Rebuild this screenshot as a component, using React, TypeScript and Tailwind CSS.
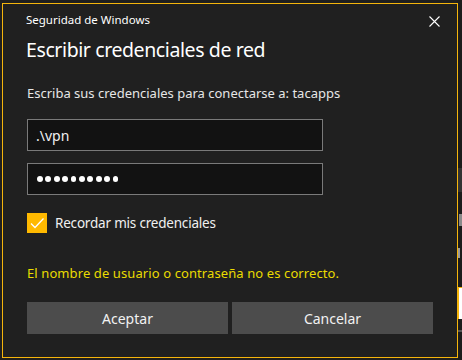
const FONT = { fontFamily: '"Noto Sans", "Open Sans", sans-serif' };

function Dots({ count }: { count: number }) {
  return (
    <div className="flex items-center gap-[2.6px]">
      {Array.from({ length: count }).map((_, i) => (
        <span key={i} className="block w-[5.8px] h-[5.8px] rounded-full bg-white" />
      ))}
    </div>
  );
}

export default function App() {
  return (
    <div className="w-[462px] h-[360px] bg-[#1f1f1f] flex overflow-hidden" style={FONT}>
      {/* dialog */}
      <div className="ml-[2px] mt-[3px] w-[456px] h-[355px] border border-[#f5b50c] bg-[#202020] flex flex-col px-[23px]">
        <div className="flex items-start justify-between mt-[8px]">
          <span className="text-[11.5px] leading-4 text-white">Seguridad de Windows</span>
          <svg width="11" height="11" viewBox="0 0 11 11" className="mt-[4px] mr-[-6px]">
            <path d="M0.5 0.5 L10.5 10.5 M10.5 0.5 L0.5 10.5" stroke="white" strokeWidth="1.1" />
          </svg>
        </div>

        <h1 className="mt-[8px] text-[19.5px] leading-7 tracking-[-0.4px] text-white">Escribir credenciales de red</h1>

        <p className="mt-[20px] text-[13px] leading-[18px] text-[#e6e6e6] ml-px">
          Escriba sus credenciales para conectarse a: tacapps
        </p>

        <div className="mt-[17px] w-[296px] h-[32px] border border-[#7a7a7a] bg-[#121212] flex items-center pl-[8px] ml-px">
          <span className="text-[14px] text-[#f0f0f0]">.\vpn</span>
        </div>

        <div className="mt-[12px] w-[296px] h-[32px] border border-[#7a7a7a] bg-[#121212] flex items-center pl-[9px] ml-px">
          <Dots count={10} />
        </div>

        <div className="mt-[18px] flex items-center gap-[8px] ml-px">
          <div className="w-[20px] h-[20px] bg-[#ffb900] flex items-center justify-center">
            <svg width="16" height="16" viewBox="0 0 16 16" fill="none">
              <path d="M2 8.5 L6 12.5 L14.5 3.5" stroke="white" strokeWidth="1.3" />
            </svg>
          </div>
          <span className="text-[13.5px] leading-5 tracking-[-0.2px] text-[#f0f0f0]">Recordar mis credenciales</span>
        </div>

        <p className="mt-[31px] text-[13px] leading-[18px] tracking-[0.1px] text-[#eadb00] ml-px">
          El nombre de usuario o contraseña no es correcto.
        </p>

        <div className="mt-[20px] flex gap-[4px] ml-px">
          <button className="w-[201px] h-[32px] bg-[#4c4c4c] text-[14px] text-[#f2f2f2]">Aceptar</button>
          <button className="w-[201px] h-[32px] bg-[#4c4c4c] text-[14px] text-[#f2f2f2]">Cancelar</button>
        </div>
      </div>

      {/* window behind, peeking out at the right edge */}
      <div className="w-[4px] flex flex-col bg-[#1c1c1c]">
        <div className="h-[168px]" />
        <div className="h-[24px] bg-[#333333]" />
        <div className="h-[22px]" />
        <div className="h-[12px] ml-px w-[3px] bg-[#8a8a8a]" />
        <div className="h-[22px]" />
        <div className="h-[10px] w-[2px] bg-[#9a9a9a]" />
        <div className="h-[29px]" />
        <div className="h-[32px] bg-white border-t border-l border-[#f5b50c]" />
        <div className="h-[11px]" />
        <div className="h-[2px] bg-[#555555]" />
      </div>
    </div>
  );
}
